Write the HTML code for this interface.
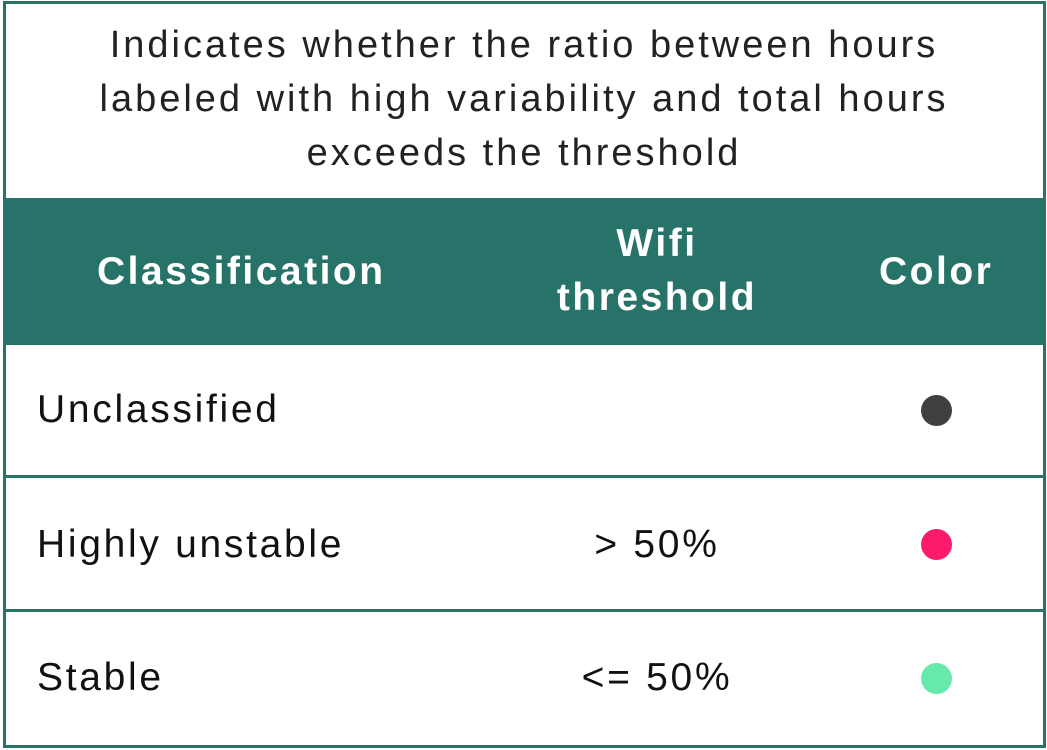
<!DOCTYPE html><html><head><style>
body{margin:0;width:1047px;height:750px;background:#fff;position:relative;overflow:hidden;font-family:"Liberation Sans",sans-serif;}
.a{position:absolute}
.t{color:#222;font-size:38px;letter-spacing:3px;line-height:54px;text-align:center;left:7px;width:1034px;top:18px}
.h{color:#fff;font-weight:bold;font-size:39px;letter-spacing:2.5px;line-height:54px}
.c{color:#111;font-size:39px;letter-spacing:2.7px}
.dot{width:31px;height:31px;border-radius:50%;left:921px}
.ctr{left:522px;width:270px;text-align:center}
</style></head><body>
<div class="a" style="left:3px;top:1px;width:1037px;height:741px;border:3px solid #27736a"></div>
<div class="a" style="left:3px;top:198px;width:1040px;height:147px;background:#27736a"></div>
<div class="a" style="left:3px;top:475px;width:1040px;height:3px;background:#27736a"></div>
<div class="a" style="left:3px;top:609px;width:1040px;height:3px;background:#27736a"></div>
<div class="a t">Indicates whether the ratio between hours<br>labeled with high variability and total hours<br>exceeds the threshold</div>
<div class="a h" style="left:97px;top:245px">Classification</div>
<div class="a h ctr" style="top:217px">Wifi<br>threshold</div>
<div class="a h" style="left:879px;top:245px">Color</div>
<div class="a c" style="left:37px;top:388px">Unclassified</div>
<div class="a c" style="left:37px;top:523px">Highly unstable</div>
<div class="a c ctr" style="top:523px">&gt; 50%</div>
<div class="a c" style="left:37px;top:656px">Stable</div>
<div class="a c ctr" style="top:656px">&lt;= 50%</div>
<div class="a dot" style="top:395px;background:#404040"></div>
<div class="a dot" style="top:529px;background:#fc1a6c"></div>
<div class="a dot" style="top:663px;background:#66e9ab"></div>
</body></html>
